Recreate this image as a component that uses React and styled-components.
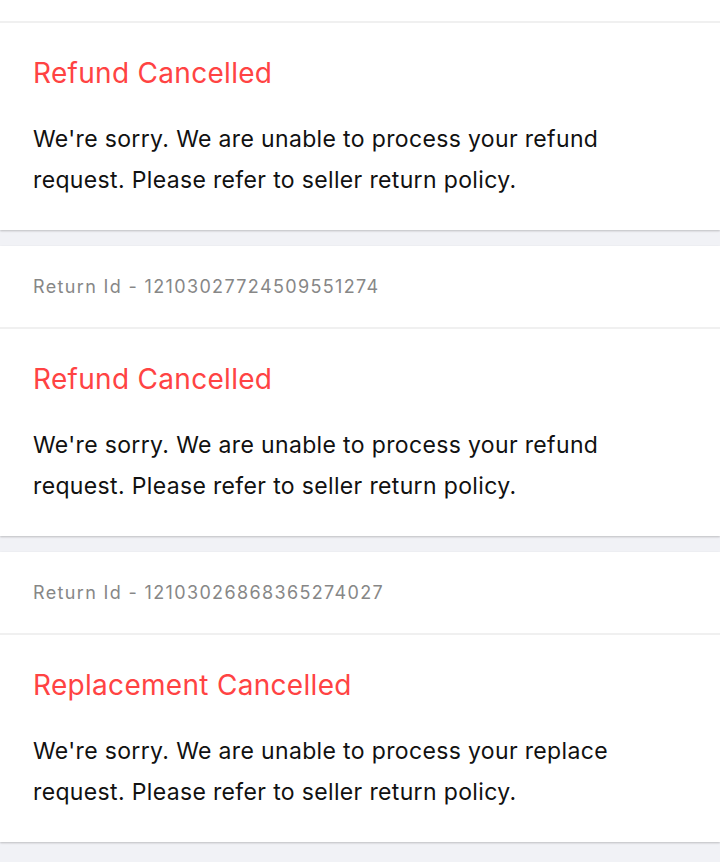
import React from 'react';
import styled, { createGlobalStyle } from 'styled-components';

const GlobalStyle = createGlobalStyle`
  html, body {
    margin: 0;
    padding: 0;
    background: #f1f2f6;
    font-family: Inter, "Noto Sans", "Liberation Sans", sans-serif;
  }
`;

const style = {};

style.Page = styled.div`
  width: 720px;
  height: 862px;
  overflow: hidden;
  background: #f1f2f6;
`;

// the list is scrolled, so the first card's header sits above the fold
style.List = styled.div`
  display: flex;
  flex-direction: column;
  gap: 16px;
  margin-top: -60px;
`;

style.Card = styled.div`
  background: #fff;
  box-shadow: 0 1px 2px rgba(0, 0, 0, 0.22);
`;

style.ReturnId = styled.div`
  padding: 30px 33px;
  font-size: 18px;
  line-height: 21px;
  letter-spacing: 1.35px;
  color: #878787;
  border-bottom: 2px solid #f0f0f0;
`;

style.Body = styled.div`
  padding: 30px 33px 29px;
`;

style.Title = styled.div`
  font-size: 28px;
  line-height: 40px;
  letter-spacing: 0.3px;
  color: #ff4343;
  margin-bottom: 26px;
`;

style.Message = styled.div`
  font-size: 23px;
  line-height: 41px;
  letter-spacing: 0.35px;
  color: #111;
`;

const returns = [
  {
    id: '12103028113457265139',
    title: 'Refund Cancelled',
    kind: 'refund',
  },
  {
    id: '12103027724509551274',
    title: 'Refund Cancelled',
    kind: 'refund',
  },
  {
    id: '12103026868365274027',
    title: 'Replacement Cancelled',
    kind: 'replace',
  },
];

const ReturnCard = ({ item }) => (
  <style.Card>
    <style.ReturnId>Return Id - {item.id}</style.ReturnId>
    <style.Body>
      <style.Title>{item.title}</style.Title>
      <style.Message>
        We're sorry. We are unable to process your {item.kind}
        <br />
        request. Please refer to seller return policy.
      </style.Message>
    </style.Body>
  </style.Card>
);

const App = () => (
  <>
    <GlobalStyle />
    <style.Page>
      <style.List>
        {returns.map((item) => (
          <ReturnCard key={item.id} item={item} />
        ))}
      </style.List>
    </style.Page>
  </>
);

export default App;
